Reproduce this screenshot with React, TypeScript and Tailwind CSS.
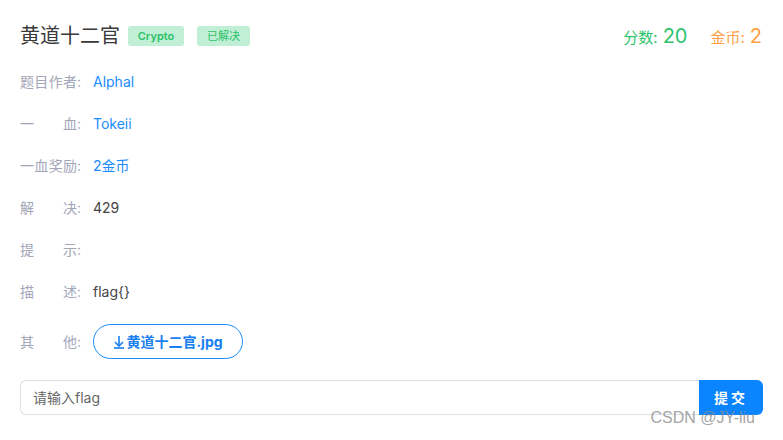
const FONT = "font-['Inter','Noto_Sans_CJK_SC',sans-serif]";

function Label({ text }: { text: string }) {
  return (
    <span className="flex w-[64px] shrink-0 text-[14px] text-[#a3a6b8]">
      <span className="w-[57px] [text-align-last:justify]">{text}</span>
      <span>:</span>
    </span>
  );
}

function Row({ label, children }: { label: string; children?: React.ReactNode }) {
  return (
    <div className="flex h-[42px] items-center gap-[9px]">
      <Label text={label} />
      <div className="text-[14px]">{children}</div>
    </div>
  );
}

function DownloadIcon() {
  return (
    <svg width="12" height="14" viewBox="0 0 12 14" fill="none" stroke="currentColor" strokeWidth="1.6">
      <path d="M6 1v10" />
      <path d="M2 7l4 4 4-4" />
      <path d="M1 13h10" />
    </svg>
  );
}

export default function App() {
  return (
    <div className={`relative h-[440px] w-[783px] bg-white px-[20px] pt-[22px] ${FONT}`}>
      {/* Header */}
      <div className="flex h-[28px] items-center justify-between pr-[1px]">
        <div className="flex items-center">
          <span className="text-[20px] text-[#3a3a3a]">黄道十二官</span>
          <span className="ml-[8px] flex h-[20px] w-[56px] items-center justify-center rounded-[3px] bg-[#c1efd5] text-[11px] font-semibold text-[#2bc26a]">
            Crypto
          </span>
          <span className="ml-[13px] flex h-[20px] w-[53px] items-center justify-center rounded-[3px] bg-[#c1efd5] text-[11px] text-[#2bc26a]">
            已解决
          </span>
        </div>
        <div className="flex items-baseline">
          <span className="text-[15px] text-[#2ec46d]">分数:</span>
          <span className="ml-[5px] text-[20px] text-[#2ec46d]">20</span>
          <span className="ml-[23px] text-[15px] text-[#ff9f45]">金币:</span>
          <span className="ml-[5px] text-[20px] text-[#ff9f45]">2</span>
        </div>
      </div>

      {/* Info rows */}
      <div className="mt-[10px]">
        <Row label="题目作者">
          <span className="text-[#1a8cff]">Alphal</span>
        </Row>
        <Row label="一血">
          <span className="text-[#1a8cff]">Tokeii</span>
        </Row>
        <Row label="一血奖励">
          <span className="text-[#1a8cff]">2金币</span>
        </Row>
        <Row label="解决">
          <span className="text-[#444]">429</span>
        </Row>
        <Row label="提示" />
        <Row label="描述">
          <span className="text-[#444]">flag{"{}"}</span>
        </Row>
        <div className="flex items-center gap-[9px] pt-[12px]">
          <Label text="其他" />
          <button className="flex h-[35px] w-[150px] items-center justify-center gap-[1px] rounded-full border border-[#1a8cff] text-[14px] font-bold text-[#1a7ff0]">
            <DownloadIcon />
            黄道十二官.jpg
          </button>
        </div>
      </div>

      {/* Flag input */}
      <div className="mt-[21px] flex h-[35px]">
        <div className="flex flex-1 items-center rounded-l-[6px] border border-r-0 border-[#dcdfe6] px-[12px] text-[14px] text-[#666]">
          请输入flag
        </div>
        <button className="w-[64px] rounded-r-[6px] bg-[#0a84ff] text-[14px] font-bold tracking-[3px] text-white">
          提交
        </button>
      </div>

      {/* Watermark */}
      <span className="absolute right-[28px] top-[406px] font-['Liberation_Sans',sans-serif] text-[16px] text-[#8c8c8c]/80">
        CSDN @JY-liu
      </span>
    </div>
  );
}
